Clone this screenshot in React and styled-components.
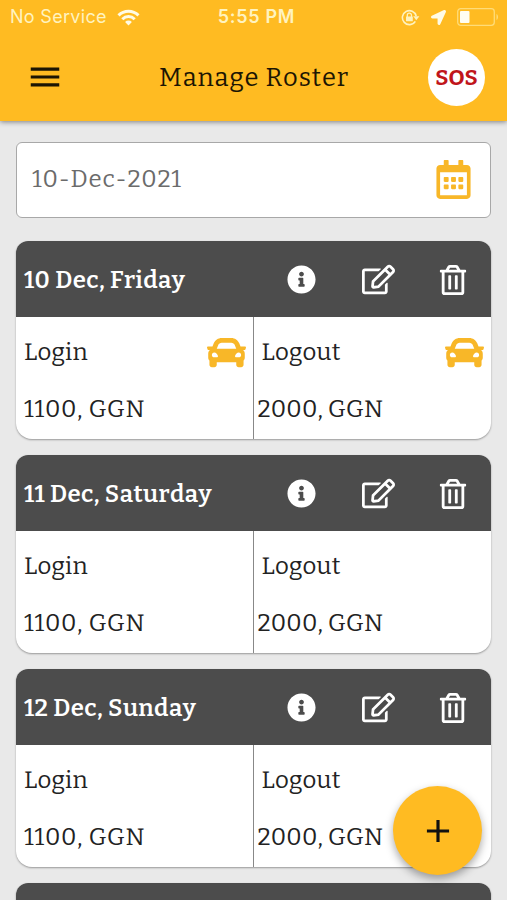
import React from "react";
import styled, { createGlobalStyle } from "styled-components";
import {
  FaRegCalendarAlt,
  FaInfoCircle,
  FaRegEdit,
  FaRegTrashAlt,
  FaCar,
  FaLocationArrow,
} from "react-icons/fa";
import { MdAdd, MdMenu } from "react-icons/md";

const amber = "#ffbb22";
const iconAmber = "#f8b728";
const charcoal = "#4c4c4c";

const GlobalStyle = createGlobalStyle`
  * { box-sizing: border-box; }
  html, body { margin: 0; padding: 0; height: 100%; overflow: hidden; }
  body {
    background: #e9e9e9;
    color: #222;
    font-family: Bitter, "DejaVu Serif", serif;
    font-kerning: none;
  }
  button { border: 0; padding: 0; background: none; font: inherit; color: inherit; }
  svg { display: block; flex: none; }
`;

const Screen = styled.div`
  position: relative;
  width: 507px;
  height: 900px;
  overflow: hidden;
  background: #e9e9e9;
`;

const Header = styled.header`
  height: 121px;
  background: ${amber};
  box-shadow: 0 1px 5px rgba(0, 0, 0, 0.45);
`;

const StatusBar = styled.div`
  height: 34px;
  padding: 0 8px 0 10px;
  display: grid;
  grid-template-columns: 1fr auto 1fr;
  align-items: center;
  color: #fff3bf;
  font: 18px/34px Inter, sans-serif;
`;

const StatusGroup = styled.div`
  display: flex;
  align-items: center;
  justify-content: ${(p) => p.$align || "flex-start"};
  gap: ${(p) => p.$gap}px;
`;

const Carrier = styled.span`
  letter-spacing: 0.3px;
`;

const Clock = styled.span`
  font-weight: 600;
  letter-spacing: 0.7px;
  margin-left: 4px;
`;

const NavBar = styled.div`
  height: 86px;
  padding: 0 22px 0 26px;
  display: grid;
  grid-template-columns: 54px 1fr 57px;
  align-items: center;
  color: #1c1503;
`;

const Title = styled.h1`
  margin: 0;
  padding-top: 1px;
  text-align: center;
  font-size: 25.5px;
  font-weight: 450;
  line-height: 40px;
  letter-spacing: 0.9px;
`;

const SosButton = styled.button`
  width: 57px;
  height: 57px;
  border-radius: 50%;
  background: #fff;
  color: #c0151b;
  font-size: 22px;
  font-weight: 700;
`;

const Content = styled.main`
  padding: 20.5px 16px 0;
  display: flex;
  flex-direction: column;
`;

const DateField = styled.div`
  height: 76px;
  margin-bottom: 23.5px;
  padding: 0 17.5px 0 15px;
  display: flex;
  align-items: center;
  justify-content: space-between;
  border: 1.5px solid #a8a8a8;
  border-radius: 6px;
  background: #fff;
  color: #6b6b6b;
`;

const Label = styled.span`
  font-size: 24px;
  line-height: 30px;
  white-space: nowrap;
  letter-spacing: ${(p) => p.$track ?? 0.2}px;
`;

const DateText = styled(Label)`
  margin-bottom: 2px;
`;

const CardList = styled.div`
  display: flex;
  flex-direction: column;
  gap: 16px;
`;

const Card = styled.article`
  height: ${(p) => (p.$peek ? 76 : 198)}px;
  flex: none;
  border-radius: 12px 12px 16px 16px;
  overflow: hidden;
  background: #fff;
  box-shadow: 0 1px 2px rgba(0, 0, 0, 0.35);
`;

const CardHeader = styled.div`
  height: 76px;
  padding: 1px 24.5px 0 8px;
  display: flex;
  align-items: center;
  justify-content: space-between;
  background: ${charcoal};
  color: #fff;
`;

const CardDay = styled(Label)`
  font-weight: 560;
`;

const Actions = styled.div`
  display: flex;
  align-items: center;
`;

const Action = styled.button`
  display: flex;
  justify-content: center;
  width: ${(p) => p.$width}px;
  margin-left: ${(p) => p.$before || 0}px;
`;

const CardBody = styled.div`
  height: 122px;
  display: grid;
  grid-template-columns: 236.5px 1fr;
`;

const Shift = styled.section`
  padding: 20px 7px 0 ${(p) => (p.$divided ? 4 : 8)}px;
  border-left: ${(p) => (p.$divided ? "1px solid #888" : "0")};
`;

const ShiftTop = styled.div`
  height: 30px;
  margin-bottom: 27px;
  padding-left: ${(p) => p.$indent}px;
  display: flex;
  align-items: center;
  justify-content: space-between;
  color: ${iconAmber};

  ${Label} { color: #222; }
`;

const AddButton = styled.button`
  position: absolute;
  left: 393px;
  top: 786px;
  width: 89px;
  height: 89px;
  display: grid;
  place-items: center;
  border-radius: 50%;
  background: ${amber};
  color: #111;
  box-shadow: 0 4px 9px rgba(0, 0, 0, 0.34);
`;

function WifiIcon() {
  return (
    <svg width="23" height="17" viewBox="0 0 23 17" fill="none" stroke="#fffbe6" strokeWidth="3">
      <path d="M1.5 6.4C7.2.8 15.8.8 21.5 6.4" />
      <path d="M5.3 10.2c3.5-3.5 8.9-3.5 12.4 0" />
      <path d="M8.1 13a4.8 4.8 0 0 1 6.8 0l-3.4 3.5z" fill="#fffbe6" stroke="none" />
    </svg>
  );
}

function RotationLockIcon() {
  return (
    <svg width="19" height="17" viewBox="0 0 19 17" fill="none" stroke="#fff3bf" strokeWidth="1.6">
      <path d="M14.3 12.4A7 7 0 1 1 15.2 7" />
      <path d="M12.2 7.2h6.2l-3.1 4z" fill="#fff3bf" stroke="none" />
      <path d="M6.3 8V6.2a2.1 2.1 0 0 1 4.2 0V8" strokeWidth="1.3" />
      <rect x="5" y="7.5" width="6.8" height="4.8" rx=".6" fill="#fff3bf" stroke="none" />
    </svg>
  );
}

function BatteryIcon() {
  return (
    <svg width="42" height="18" viewBox="0 0 42 18" fill="none">
      <rect x=".7" y=".7" width="36.6" height="16.6" rx="3" stroke="#ffdc78" strokeWidth="1.3" />
      <rect x="3" y="3" width="9.5" height="12" rx="1" fill="#fffdf2" />
      <path d="M39.5 6v6c2-1 2-5 0-6z" fill="#ffdc78" />
    </svg>
  );
}

const days = [
  { name: "10 Dec, Friday", cab: true },
  { name: "11 Dec, Saturday", cab: false },
  { name: "12 Dec, Sunday", cab: false },
];

function RosterCard({ day }) {
  return (
    <Card>
      <CardHeader>
        <CardDay $track={0.4}>{day.name}</CardDay>
        <Actions>
          <Action $width={29} aria-label="Details"><FaInfoCircle size={29} /></Action>
          <Action $width={34} $before={45.5} aria-label="Edit"><FaRegEdit size={33} /></Action>
          <Action $width={28} $before={43.5} aria-label="Delete"><FaRegTrashAlt size={30} /></Action>
        </Actions>
      </CardHeader>
      <CardBody>
        <Shift>
          <ShiftTop $indent={0}>
            <Label>Login</Label>
            {day.cab && <FaCar size={39} />}
          </ShiftTop>
          <Label $track={0.7}>1100, GGN</Label>
        </Shift>
        <Shift $divided>
          <ShiftTop $indent={4}>
            <Label>Logout</Label>
            {day.cab && <FaCar size={39} />}
          </ShiftTop>
          <Label>2000, GGN</Label>
        </Shift>
      </CardBody>
    </Card>
  );
}

export default function App() {
  return (
    <Screen>
      <GlobalStyle />
      <Header>
        <StatusBar>
          <StatusGroup $gap={10}>
            <Carrier>No Service</Carrier>
            <WifiIcon />
          </StatusGroup>
          <Clock>5:55 PM</Clock>
          <StatusGroup $gap={11} $align="flex-end">
            <RotationLockIcon />
            <FaLocationArrow size={15} color="#fffbe6" />
            <BatteryIcon />
          </StatusGroup>
        </StatusBar>
        <NavBar>
          <MdMenu size={38} />
          <Title>Manage Roster</Title>
          <SosButton>SOS</SosButton>
        </NavBar>
      </Header>
      <Content>
        <DateField>
          <DateText $track={0.8}>10-Dec-2021</DateText>
          <FaRegCalendarAlt size={39} color={iconAmber} />
        </DateField>
        <CardList>
          {days.map((day) => (
            <RosterCard key={day.name} day={day} />
          ))}
          <Card $peek>
            <CardHeader />
          </Card>
        </CardList>
      </Content>
      <AddButton aria-label="Add roster"><MdAdd size={38} /></AddButton>
    </Screen>
  );
}
